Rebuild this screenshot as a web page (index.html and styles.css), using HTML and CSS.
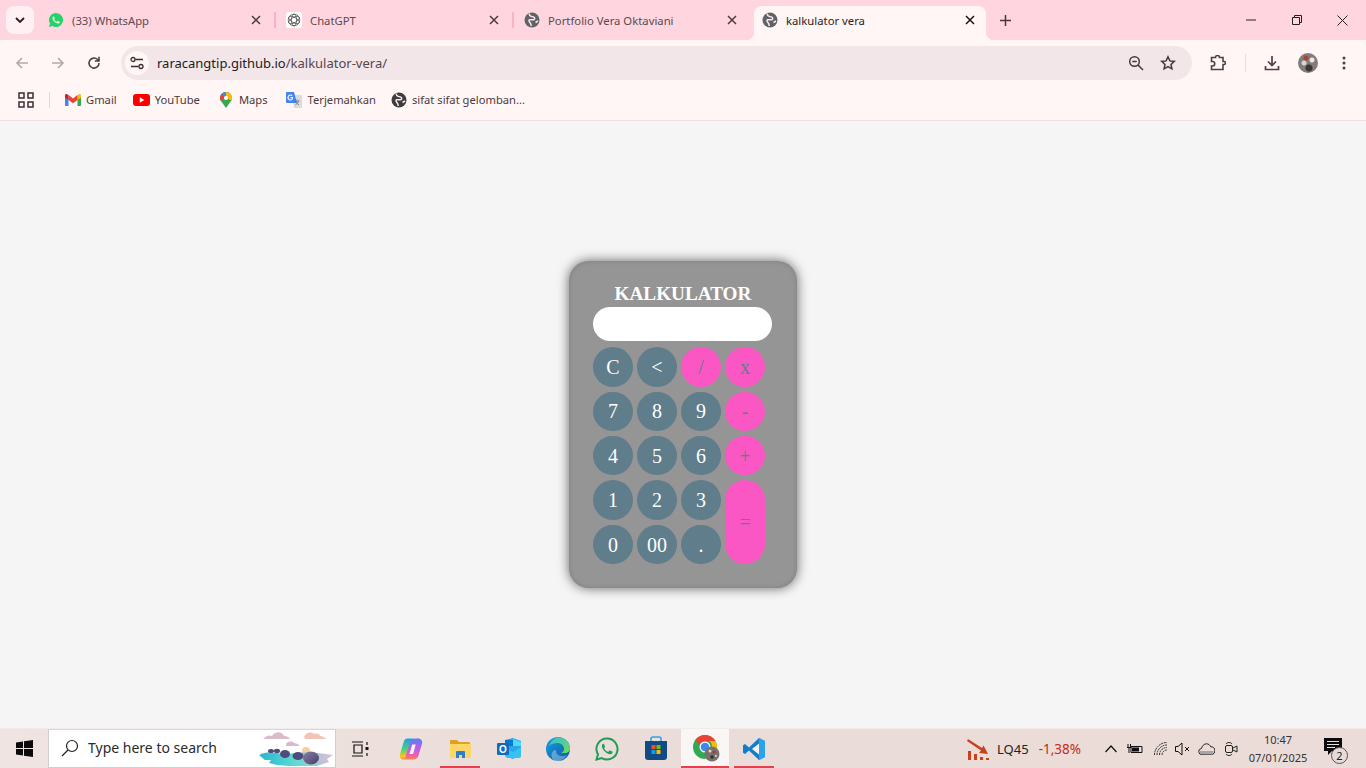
FILE: index.html

```html
<!DOCTYPE html>
<html lang="en">
<head>
    <meta charset="UTF-8">
    <title>kalkulator vera</title>
    <link rel="stylesheet" href="styles.css">
</head>
<body>

<svg class="defs" width="0" height="0">
    <symbol id="globe" viewBox="0 0 16 16">
        <circle cx="8" cy="8" r="7.500" fill="currentColor"/>
        <path d="M5.500 1.500c-1 2.500 2 3 4 3.500 1.800.5 1.500 2.800-.5 2.800-2.200 0-4-.8-4 .9 0 1.600 2.200 1.600 2.200 5.300" fill="none" stroke="#ffe6eb" stroke-width="1.500"/>
        <path d="M11.500 10.500l2.500-1.500" fill="none" stroke="#ffe6eb" stroke-width="1.500"/>
    </symbol>
    <symbol id="close" viewBox="0 0 10 10">
        <path d="M1 1l8 8M9 1l-8 8" stroke="currentColor" stroke-width="1.500" fill="none"/>
    </symbol>
    <symbol id="wa" viewBox="0 0 24 24">
        <path d="M12 1.500A10.500 10.500 0 0 0 3 17.400L1.500 22.500l5.300-1.400A10.500 10.500 0 1 0 12 1.500z" fill="#25d366"/>
        <path d="M8.300 6.800c-.5 0-1.400.7-1.400 2.300 0 3.400 4.500 8.100 8.200 8.100 1.600 0 2.500-1.100 2.500-1.900 0-.5-.1-.7-.4-.8l-2.300-1.100c-.3-.1-.5 0-.7.3l-.8 1c-.2.200-.4.200-.7.100-1.500-.7-2.700-1.800-3.500-3.300-.1-.3 0-.4.100-.6l.6-.8c.2-.2.200-.4.100-.7L9.100 7.300c-.2-.4-.4-.5-.8-.5z" fill="#fff"/>
    </symbol>
</svg>

<div class="page">
    <div class="tabstrip">
        <button class="tab-menu">
            <svg width="10" height="6" viewBox="0 0 10 6"><path d="M1 1l4 4 4-4" stroke="#2a1a20" stroke-width="1.800" fill="none"/></svg>
        </button>

        <div class="tab">
            <svg class="favicon" viewBox="0 0 24 24"><use href="#wa"/></svg>
            <span class="tab-title">(33) WhatsApp</span>
            <svg class="tab-x"><use href="#close"/></svg>
        </div>
        <i class="tab-sep"></i>
        <div class="tab">
            <span class="favicon gpt-box">
                <svg width="14" height="14" viewBox="0 0 14 14" fill="none" stroke="#555" stroke-width=".8">
                    <circle cx="7" cy="7" r="5.800"/>
                    <ellipse cx="7" cy="7" rx="6" ry="2.600" transform="rotate(30 7 7)"/>
                    <ellipse cx="7" cy="7" rx="6" ry="2.600" transform="rotate(90 7 7)"/>
                    <ellipse cx="7" cy="7" rx="6" ry="2.600" transform="rotate(150 7 7)"/>
                </svg>
            </span>
            <span class="tab-title">ChatGPT</span>
            <svg class="tab-x"><use href="#close"/></svg>
        </div>
        <i class="tab-sep"></i>
        <div class="tab">
            <svg class="favicon grey"><use href="#globe"/></svg>
            <span class="tab-title">Portfolio Vera Oktaviani</span>
            <svg class="tab-x"><use href="#close"/></svg>
        </div>
        <i class="tab-sep off"></i>
        <div class="tab active">
            <svg class="favicon grey"><use href="#globe"/></svg>
            <span class="tab-title">kalkulator vera</span>
            <svg class="tab-x"><use href="#close"/></svg>
        </div>

        <svg class="new-tab" width="11" height="11" viewBox="0 0 11 11"><path d="M5.500 0v11M0 5.500h11" stroke="#4a3640" stroke-width="1.500"/></svg>

        <div class="win-btns">
            <svg width="10" height="10" viewBox="0 0 10 10"><path d="M0 5h10" stroke="#222" stroke-width="1"/></svg>
            <svg width="10" height="10" viewBox="0 0 10 10" fill="none" stroke="#222"><path d="M.5 2.500h7v7h-7zM2.500 2.500v-2h7v7h-2"/></svg>
            <svg width="11" height="11" viewBox="0 0 11 11"><path d="M.5.500l10 10M10.500.500l-10 10" stroke="#222" stroke-width="1"/></svg>
        </div>
    </div>

    <div class="toolbar">
        <svg class="tool dim" viewBox="0 0 16 16"><path d="M14 8H3M8 3L3 8l5 5" stroke="currentColor" stroke-width="1.600" fill="none"/></svg>
        <svg class="tool dim" viewBox="0 0 16 16"><path d="M2 8h11M8 3l5 5-5 5" stroke="currentColor" stroke-width="1.600" fill="none"/></svg>
        <svg class="tool" viewBox="0 0 16 16"><path d="M13 8a5 5 0 1 1-1.500-3.500L13 6M13 1.800V6H8.800" stroke="currentColor" stroke-width="1.600" fill="none"/></svg>

        <div class="address">
            <span class="site-info">
                <svg width="14" height="14" viewBox="0 0 14 14" fill="none" stroke="#3c2c32" stroke-width="1.300">
                    <path d="M5.500 3.500H13M1 10.500h7.500"/>
                    <circle cx="3" cy="3.500" r="2"/>
                    <circle cx="11" cy="10.500" r="2"/>
                </svg>
            </span>
            <span class="url">raracangtip.github.io<span class="url-path">/kalkulator-vera/</span></span>
            <svg class="addr-icon" viewBox="0 0 16 16" fill="none" stroke="#4a363d" stroke-width="1.500"><circle cx="6.500" cy="6.500" r="4.800"/><path d="M10 10l5 5M4.300 6.500h4.400"/></svg>
            <svg class="addr-icon" viewBox="0 0 16 16" fill="none" stroke="#4a363d" stroke-width="1.500"><path d="M8 1.800l1.900 4.100 4.400.5-3.300 3 .9 4.400L8 11.600l-3.900 2.200.9-4.400-3.300-3 4.400-.5z"/></svg>
        </div>

        <svg class="tool ext" viewBox="0 0 16 16" fill="none" stroke="currentColor" stroke-width="1.600"><path d="M1.500 2.500h4a2 2 0 0 1 4 0h3.500v4h1a1.500 1.500 0 0 1 0 3h-1v5H1.500v-3.500h1a2 2 0 0 0 0-4.500h-1z"/></svg>
        <i class="tool-sep"></i>
        <svg class="tool dl" viewBox="0 0 16 16" fill="none" stroke="currentColor" stroke-width="1.700"><path d="M8 1v9M4 6.500L8 10.500l4-4M1.500 11v3.500h13V11"/></svg>
        <span class="avatar"></span>
        <svg class="kebab" width="4" height="14" viewBox="0 0 4 14" fill="#553c44"><circle cx="2" cy="2" r="1.500"/><circle cx="2" cy="7" r="1.500"/><circle cx="2" cy="12" r="1.500"/></svg>
    </div>

    <div class="bookmarks">
        <svg class="apps" width="16" height="16" viewBox="0 0 16 16" fill="none" stroke="#3c2c32" stroke-width="1.500"><path d="M1 1h5v5H1zM10 1h5v5h-5zM1 10h5v5H1zM10 10h5v5h-5z"/></svg>
        <i class="book-sep"></i>
        <div class="bm bm-gmail">
            <svg width="16" height="12" viewBox="0 0 16 12">
                <path d="M0 2v9a1 1 0 0 0 1 1h2.500V5.500z" fill="#4285f4"/>
                <path d="M16 2v9a1 1 0 0 1-1 1h-2.500V5.500z" fill="#34a853"/>
                <path d="M12.500 1v5L16 3.500V1.500C16 .300 14.600-.300 13.700.400z" fill="#fbbc04"/>
                <path d="M3.500 1v5L8 9.300 12.500 6V1L8 4.400z" fill="#ea4335"/>
                <path d="M0 1.500v2L3.500 6V1L2.300.400C1.400-.300 0 .300 0 1.500z" fill="#c5221f"/>
            </svg>
            <span>Gmail</span>
        </div>
        <div class="bm bm-yt">
            <svg width="17" height="12" viewBox="0 0 17 12"><rect width="17" height="12" rx="3" fill="#f00"/><path d="M6.800 3.300v5.400L11.300 6z" fill="#fff"/></svg>
            <span>YouTube</span>
        </div>
        <div class="bm bm-maps">
            <svg width="12" height="16" viewBox="0 0 12 16">
                <path d="M6 0a6 6 0 0 1 6 6c0 1.500-.6 2.600-1.400 3.600L6 16 1.400 9.600C.6 8.600 0 7.500 0 6a6 6 0 0 1 6-6z" fill="#34a853"/>
                <path d="M1.400 9.600L10 1.400A6 6 0 0 0 6 0a6 6 0 0 0-4.600 2.100z" fill="#4285f4"/>
                <path d="M6 0a6 6 0 0 1 6 6 5 5 0 0 1-.6 2.400L6 6z" fill="#fbbc04"/>
                <path d="M1.400 2.100A6 6 0 0 0 0 6c0 1.200.4 2.300 1 3.100L6 6z" fill="#ea4335"/>
                <circle cx="6" cy="6" r="2.100" fill="#fff"/>
            </svg>
            <span>Maps</span>
        </div>
        <div class="bm bm-tr">
            <svg width="16" height="16" viewBox="0 0 16 16">
                <path d="M6 3h9a1 1 0 0 1 1 1v11a1 1 0 0 1-1 1H8z" fill="#d9dcdc"/>
                <path d="M1 0h7l3 11H1a1 1 0 0 1-1-1V1a1 1 0 0 1 1-1z" fill="#4285f4"/>
                <path d="M7 5H4.500v1.200H6c-.2.800-.800 1.200-1.500 1.200a1.900 1.900 0 0 1 0-3.800c.5 0 .9.200 1.200.500l.9-.9A3.100 3.100 0 1 0 4.500 8.600C6.200 8.600 7.300 7.300 7 5z" fill="#fff"/>
                <path d="M11 7.500v1M9 9h4.500M12.500 9c-.3 1.500-1.500 3-3 3.800M10 10c.5 1 1.500 2 3 2.800" stroke="#6b7075" fill="none" stroke-width=".8"/>
            </svg>
            <span>Terjemahkan</span>
        </div>
        <div class="bm bm-last">
            <svg class="bm-globe" width="16" height="16"><use href="#globe"/></svg>
            <span>sifat sifat gelomban...</span>
        </div>
    </div>

    <main class="content">
        <div class="kalkulator">
            <h1 class="judul">KALKULATOR</h1>
            <input class="layar" type="text">
            <div class="tombol">
                <button class="btn">C</button>
                <button class="btn">&lt;</button>
                <button class="btn op">/</button>
                <button class="btn op">x</button>
                <button class="btn">7</button>
                <button class="btn">8</button>
                <button class="btn">9</button>
                <button class="btn op">-</button>
                <button class="btn">4</button>
                <button class="btn">5</button>
                <button class="btn">6</button>
                <button class="btn op">+</button>
                <button class="btn">1</button>
                <button class="btn">2</button>
                <button class="btn">3</button>
                <button class="btn op sama">=</button>
                <button class="btn">0</button>
                <button class="btn">00</button>
                <button class="btn">.</button>
            </div>
        </div>
    </main>

    <div class="taskbar">
        <svg class="win-logo" width="17" height="17" viewBox="0 0 17 17" fill="#0b0b0b"><path d="M0 2.400l7-1v6.600H0zM8 1.300L17 0v8H8zM0 9h7v6.600l-7-1zM8 9h9v8l-9-1.300z"/></svg>

        <div class="search">
            <svg width="18" height="18" viewBox="0 0 18 18" fill="none" stroke="#222" stroke-width="1.200"><circle cx="11" cy="7" r="5.500"/><path d="M7 11l-6 6"/></svg>
            <span class="search-text">Type here to search</span>
            <svg class="scene" width="76" height="38" viewBox="0 0 76 38">
                <defs>
                    <linearGradient id="air" x1="0" x2="1"><stop offset="0" stop-color="#25b6d2"/><stop offset=".5" stop-color="#5fdcd0"/><stop offset="1" stop-color="#e7b8dc"/></linearGradient>
                    <linearGradient id="rock" x1="0" y1="0" x2="1" y2="1"><stop offset="0" stop-color="#8c7ea0"/><stop offset="1" stop-color="#453f6e"/></linearGradient>
                </defs>
                <path d="M5 8c3-3 6-3 8-2 3-5 10-5 12 0 3 0 5 1 6 3H5z" fill="#d9bccb"/>
                <path d="M45 7c1-4 7-6 10-3 3-1 6 0 6 2 3 0 5 2 6 3H46z" fill="#f3c4b6"/>
                <path d="M27 14c2-3 6-3 8-1 2 0 4 1 6 3H27z" fill="#dcb8d0"/>
                <circle cx="47" cy="21" r="4" fill="#f6cf9f"/>
                <path d="M0 25c8-4 16-2 24-1l28-2 22 3-6 4 2 3-12 4H30l-12-1-8-2 2-3-6 0z" fill="url(#air)"/>
                <ellipse cx="12" cy="21" rx="3" ry="2" fill="#4e4a7c"/>
                <ellipse cx="18" cy="21" rx="3" ry="2.200" fill="#4e4a7c"/>
                <ellipse cx="26" cy="24" rx="5" ry="4" fill="#4e4a7c"/>
                <ellipse cx="39" cy="26" rx="5.500" ry="4" fill="#4e4a7c"/>
                <ellipse cx="52" cy="28" rx="8" ry="6.500" fill="url(#rock)"/>
            </svg>
        </div>

        <div class="task-item task-view">
            <svg width="18" height="16" viewBox="0 0 18 16" fill="none" stroke="#111" stroke-width="1.200"><path d="M1 1h11M1 15h11M3 4h8v8H3zM16 1v3M16 12v3"/><rect x="14.500" y="6" width="3" height="3" fill="#111" stroke="none"/></svg>
        </div>
        <div class="task-item">
            <svg width="24" height="24" viewBox="0 0 24 24">
                <defs>
                    <linearGradient id="cop1" x1="0" y1="0" x2="0" y2="1"><stop offset="0" stop-color="#1b9fe8"/><stop offset=".5" stop-color="#49d27a"/><stop offset=".85" stop-color="#f8c81e"/><stop offset="1" stop-color="#f58a3c"/></linearGradient>
                    <linearGradient id="cop2" x1="0" y1="0" x2="0" y2="1"><stop offset="0" stop-color="#5a7cf5"/><stop offset=".45" stop-color="#b95ee8"/><stop offset=".8" stop-color="#f55bb0"/><stop offset="1" stop-color="#f6883c"/></linearGradient>
                </defs>
                <path d="M8.500 1.500h5c2.500 0 3.500 1.500 2.800 3.500L12 18.500c-.8 2.500-2.500 4-5 4H5c-3 0-4.800-2.500-4-5.300L4.500 5.500C5.200 3 6.500 1.500 8.500 1.500z" fill="url(#cop1)"/>
                <path d="M17 1.500h2c3 0 5 2.500 4 5.300L19.500 18.500c-.8 2.500-2.500 4-5 4h-5c-2.500 0-3.500-1.500-2.800-3.500L11 5.500c.8-2.500 3.500-4 6-4z" fill="url(#cop2)"/>
                <path d="M13.200 7.500h3.500l-2.600 9.500h-3.600z" fill="#fdf6f6"/>
            </svg>
        </div>
        <div class="task-item open">
            <svg width="22" height="20" viewBox="0 0 22 20">
                <path d="M1 2a1 1 0 0 1 1-1h6l2 2h10a1 1 0 0 1 1 1v3H1z" fill="#e0a020"/>
                <path d="M1 5h20a1 1 0 0 1 1 1v12a1 1 0 0 1-1 1H2a1 1 0 0 1-1-1z" fill="#fcd669"/>
                <path d="M7 19v-6a1 1 0 0 1 1-1h7a1 1 0 0 1 1 1v6h-3v-3h-3v3z" fill="#2f7fc7"/>
            </svg>
        </div>
        <div class="task-item">
            <svg width="24" height="22" viewBox="0 0 24 22">
                <path d="M8 2l8-2 8 3v14l-8 4-8-3z" fill="#28a8ea"/>
                <path d="M8 2h8v6H8z" fill="#0078d4"/>
                <path d="M16 1l8 3v4h-8z" fill="#50d9ff"/>
                <path d="M24 9v9a2 2 0 0 1-2 2H10l-2-2V10l8 4z" fill="#35c1f1"/>
                <rect y="5" width="12" height="12" rx="1" fill="#0f6cbd"/>
                <text x="6" y="15" class="ol-letter">O</text>
            </svg>
        </div>
        <div class="task-item">
            <svg width="24" height="24" viewBox="0 0 24 24">
                <defs>
                    <linearGradient id="edge1" x1="0" y1="0" x2="1" y2="1"><stop offset="0" stop-color="#1b9de2"/><stop offset="1" stop-color="#0c59a4"/></linearGradient>
                    <linearGradient id="edge2" x1="0" y1="0" x2="1" y2="1"><stop offset="0" stop-color="#33bfd8"/><stop offset="1" stop-color="#6fdc54"/></linearGradient>
                </defs>
                <circle cx="12" cy="12" r="12" fill="url(#edge1)"/>
                <path d="M3 9C5 3 10 0 14 .4c5 .4 10 5 10 11 0 2-1 4-4 4.500h-5c2-1 3-2 3-4 0-4-3.500-6-6.500-6C8 6 4.500 7 3 9z" fill="url(#edge2)"/>
                <path d="M10 14c0 3 3 5 6 5 2 0 3.600-.5 5-1.600C19 21.500 15 24 11 24c-3 0-5.500-2-5.500-6 0-3 2-5 4.500-5z" fill="#e9f7fb" opacity=".35"/>
            </svg>
        </div>
        <div class="task-item">
            <svg width="24" height="24" viewBox="0 0 24 24">
                <path d="M12 1.500A10.500 10.500 0 0 0 3 17.400L1.500 22.500l5.300-1.400A10.500 10.500 0 1 0 12 1.500z" fill="none" stroke="#1f9e57" stroke-width="2"/>
                <path d="M8.300 6.800c-.5 0-1.400.7-1.400 2.300 0 3.400 4.500 8.100 8.200 8.100 1.600 0 2.500-1.100 2.500-1.900 0-.5-.1-.7-.4-.8l-2.300-1.100c-.3-.1-.5 0-.7.3l-.8 1c-.2.200-.4.200-.7.100-1.500-.7-2.700-1.800-3.500-3.300-.1-.3 0-.4.100-.6l.6-.8c.2-.2.200-.4.100-.7L9.100 7.300c-.2-.4-.4-.5-.8-.5z" fill="#1f9e57"/>
            </svg>
        </div>
        <div class="task-item">
            <svg width="24" height="25" viewBox="0 0 24 25">
                <path d="M7 7V3a2 2 0 0 1 2-2h6a2 2 0 0 1 2 2v4" fill="none" stroke="#2aa7e8" stroke-width="1.600"/>
                <path d="M1 5h22v16a3 3 0 0 1-3 3H4a3 3 0 0 1-3-3z" fill="#124a85"/>
                <rect x="7.500" y="9" width="4" height="4" fill="#f25022"/>
                <rect x="12.500" y="9" width="4" height="4" fill="#7fba00"/>
                <rect x="7.500" y="14" width="4" height="4" fill="#00a4ef"/>
                <rect x="12.500" y="14" width="4" height="4" fill="#ffb900"/>
            </svg>
        </div>
        <div class="task-item current">
            <svg class="chrome-ic" width="27" height="27" viewBox="0 0 27 27">
                <circle cx="12" cy="12" r="12" fill="#34a853"/>
                <path d="M12 0a12 12 0 0 1 10.400 6H12a6 6 0 0 0-5.600 3.800L2.500 4.800A12 12 0 0 1 12 0z" fill="#ea4335"/>
                <path d="M22.400 6A12 12 0 0 1 12 24l5.200-9a6 6 0 0 0-.6-9z" fill="#fbbc04"/>
                <circle cx="12" cy="12" r="5.500" fill="#fff"/>
                <circle cx="12" cy="12" r="4.300" fill="#4285f4"/>
                <circle cx="19" cy="19" r="7.500" fill="#77716f"/>
                <circle cx="17" cy="16" r="1.500" fill="#d8d4d2"/>
                <circle cx="21" cy="17" r="1.500" fill="#a63d33"/>
                <circle cx="19" cy="22" r="1.800" fill="#36312f"/>
                <circle cx="23" cy="21" r="1" fill="#e0dcda"/>
            </svg>
        </div>
        <div class="task-item open">
            <svg width="24" height="24" viewBox="0 0 24 24">
                <path d="M17 1l6 3v16l-6 3L7 13.500 3 17l-2-1.200V8.200L3 7l4 3.500z" fill="#0e7fd0"/>
                <path d="M17 6.500L10 12l7 5.500z" fill="#fbf0ec"/>
                <path d="M17 1l6 3v16l-6 3z" fill="#2aa3ea"/>
            </svg>
        </div>

        <div class="tray">
            <svg class="lq-icon" width="24" height="24" viewBox="0 0 24 24" fill="#c8401c">
                <path d="M1 2l14 9 1.500-2.500L21 17l-9-1 2-2.500L0 4z"/>
                <rect x="1" y="14" width="3" height="9"/>
                <rect x="7" y="17" width="3" height="6"/>
                <rect x="13" y="20" width="3" height="3"/>
                <rect x="19" y="21" width="3" height="2"/>
            </svg>
            <span class="lq-name">LQ45</span>
            <span class="lq-val">-1,38%</span>

            <svg class="tray-ic caret" width="12" height="8" viewBox="0 0 12 8" fill="none" stroke="#111" stroke-width="1.200"><path d="M.5 7L6 1l5.500 6"/></svg>
            <svg class="tray-ic batt" width="16" height="12" viewBox="0 0 16 12" fill="none" stroke="#111"><path d="M4 3.500h11v6H4z"/><rect x="5" y="4.500" width="7" height="4" fill="#111" stroke="none"/><path d="M1 1v3M3.500 1v3M0 4.500h4.500M2 5v5" stroke-width="1"/></svg>
            <svg class="tray-ic wifi" width="14" height="14" viewBox="0 0 14 14" fill="none" stroke="#333" stroke-width="1"><path d="M.5 13A12.500 12.500 0 0 1 13 .5M3 13A10 10 0 0 1 13 3M5.500 13A7.500 7.500 0 0 1 13 5.500M8 13a5 5 0 0 1 5-5" stroke-dasharray="2 .7"/></svg>
            <svg class="tray-ic mute" width="15" height="14" viewBox="0 0 15 14" fill="none" stroke="#111" stroke-width="1"><path d="M.5 4.500h2.500L7 1v12L3 9.500H.5zM10 5l4 4M14 5l-4 4"/></svg>
            <svg class="tray-ic cloud" width="17" height="12" viewBox="0 0 17 12" fill="none" stroke="#222" stroke-width="1"><path d="M4 11.500a3 3 0 0 1-.5-6C4 3 6 .8 8.500.8c2 0 3.500 1.200 4.200 3a3.800 3.800 0 0 1 .5 7.700z"/><path d="M1.500 8h14v2l-2 1.500h-9L2 10.500z" fill="#a9a5a4" stroke="none"/></svg>
            <svg class="tray-ic cam" width="13" height="16" viewBox="0 0 13 16" fill="none" stroke="#222" stroke-width="1"><path d="M1 3c1-2 5-2 6 0M1 13c1 2 5 2 6 0"/><rect x=".5" y="4.500" width="7" height="7" rx="1.500"/><path d="M8 7l4-2v6l-4-2"/></svg>

            <div class="clock">
                <span>10:47</span>
                <span>07/01/2025</span>
            </div>

            <div class="notif">
                <svg width="18" height="17" viewBox="0 0 18 17" fill="#0b0b0b"><path d="M0 0h18v13H8l-4 4v-4H0z"/><path d="M3 3.500h12M3 6.500h12M3 9.500h8" stroke="#efe0dc" stroke-width="1"/></svg>
                <span class="badge">2</span>
            </div>
        </div>
    </div>
</div>

</body>
</html>
```

FILE: styles.css

```css
* {
    padding: 0;
    margin: 0;
    box-sizing: border-box;
}

html, body {
    width: 1366px;
    height: 768px;
    overflow: hidden;
}

body {
    font-family: "Noto Sans", "Open Sans", sans-serif;
    background: #f5f5f5;
}

.defs {
    position: absolute;
}

.page {
    height: 768px;
    display: flex;
    flex-direction: column;
}

/* tab bar */
.tabstrip {
    height: 40px;
    flex: none;
    display: flex;
    align-items: flex-end;
    background: #ffd6df;
    padding-left: 6px;
}

.tab-menu {
    width: 28px;
    height: 28px;
    margin: 0 6px 6px 0;
    border: 0;
    border-radius: 8px;
    background: #fff0f3;
    display: flex;
    align-items: center;
    justify-content: center;
}

.tab {
    width: 232px;
    height: 34px;
    padding: 0 10px 6px;
    display: flex;
    align-items: center;
    position: relative;
    color: #5a4a50;
    font-size: 11.300px;
}

.tab.active {
    background: #fff6f5;
    border-radius: 8px 8px 0 0;
    color: #2c2226;
}

.tab.active::before,
.tab.active::after {
    content: "";
    position: absolute;
    bottom: 0;
    width: 8px;
    height: 8px;
}

.tab.active::before {
    left: -8px;
    background: radial-gradient(circle at 0 0, transparent 8px, #fff6f5 8.500px);
}

.tab.active::after {
    right: -8px;
    background: radial-gradient(circle at 100% 0, transparent 8px, #fff6f5 8.500px);
}

.favicon {
    width: 16px;
    height: 16px;
    flex: none;
    margin-left: -2px;
}

.favicon.grey {
    color: #5f6368;
}

.gpt-box {
    background: #fff;
    border-radius: 2px;
    display: flex;
    align-items: center;
    justify-content: center;
}

.tab-title {
    flex: 1;
    margin-left: 8px;
    white-space: nowrap;
}

.tab-x {
    width: 10px;
    height: 10px;
    flex: none;
    margin-right: 1px;
    color: #4a3a40;
}

.tab.active .tab-x {
    color: #1c1216;
}

.tab-sep {
    width: 2px;
    height: 16px;
    margin: 0 2px 12px;
    background: #f8b4c2;
}

.tab-sep.off {
    background: none;
}

.new-tab {
    margin: 0 0 14px 14px;
}

.win-btns {
    margin-left: auto;
    width: 138px;
    height: 40px;
    display: flex;
    align-items: center;
    justify-content: space-between;
    padding: 0 18px;
    align-self: flex-start;
}

/* toolbar */
.toolbar {
    height: 40px;
    flex: none;
    background: #fff6f5;
    border-radius: 8px 8px 0 0;
    display: flex;
    align-items: flex-end;
    padding-left: 14px;
    color: #553c44;
}

.tool {
    width: 16px;
    height: 16px;
    flex: none;
    margin: 0 20px 9px 0;
}

.tool.dim {
    color: #b4a8ac;
}

.address {
    width: 1071px;
    height: 34px;
    margin-left: -1px;
    background: #f2e6e9;
    border-radius: 17px;
    display: flex;
    align-items: center;
    padding: 0 16px 0 4px;
}

.site-info {
    width: 24px;
    height: 24px;
    border-radius: 50%;
    background: #fff6f5;
    display: flex;
    align-items: center;
    justify-content: center;
}

.url {
    flex: 1;
    margin-left: 8px;
    font-size: 13px;
    color: #241a1e;
}

.url-path {
    color: #56474d;
}

.addr-icon {
    width: 16px;
    height: 16px;
    margin-left: 16px;
}

.tool.ext {
    margin: 0 19px 9px 18px;
}

.tool-sep {
    width: 1px;
    height: 18px;
    margin: 0 18px 8px 0;
    background: #f7d5dc;
}

.tool.dl {
    margin: 0 18px 9px 0;
}

.avatar {
    width: 20px;
    height: 20px;
    margin-bottom: 7px;
    border-radius: 50%;
    background:
        radial-gradient(circle at 40% 25%, #a8453a 0 2px, transparent 3px),
        radial-gradient(circle at 70% 35%, #ece8e6 0 2px, transparent 3px),
        radial-gradient(circle at 30% 50%, #d9d5d3 0 2px, transparent 3px),
        radial-gradient(circle at 55% 75%, #3c3634 0 3px, transparent 4px),
        #827c7a;
}

.kebab {
    margin: 0 0 10px 24px;
}

/* bookmarks */
.bookmarks {
    height: 41px;
    flex: none;
    background: #fff6f5;
    border-bottom: 1px solid #f6dde2;
    display: flex;
    align-items: center;
    padding: 0 0 1px 18px;
    font-size: 11.200px;
    color: #4a3a40;
}

.book-sep {
    width: 1px;
    height: 16px;
    margin: 0 15px;
    background: #f7cfd8;
}

.bm {
    display: flex;
    align-items: center;
    gap: 6px;
    margin-right: 17px;
    white-space: nowrap;
}

.bm-gmail {
    gap: 5px;
    margin-right: 16px;
}

.bm-yt {
    gap: 5px;
    margin-right: 20px;
}

.bm-maps {
    gap: 7px;
    margin-right: 18px;
}

.bm-tr {
    margin-right: 15px;
}

.bm-last {
    gap: 5px;
}

.bm-globe {
    color: #3c3c40;
}

/* calculator */
.content {
    flex: 1;
    display: flex;
    align-items: center;
    justify-content: center;
    background: #f5f5f5;
}

.kalkulator {
    width: 228px;
    height: 327px;
    padding: 22px 24px;
    background: #959595;
    border-radius: 20px;
    box-shadow: 0 0 12px rgba(0, 0, 0, .6), inset 0 0 5px rgba(0, 0, 0, .15);
}

.judul {
    height: 24px;
    width: 180px;
    text-align: center;
    font: bold 19.200px/22px "Liberation Serif", serif;
    color: #fff;
}

.layar {
    display: block;
    width: 179px;
    height: 34px;
    border: 0;
    border-radius: 17px;
    background: #fff;
}

.tombol {
    margin-top: 6.200px;
    display: grid;
    grid-template-columns: repeat(4, 40px);
    grid-auto-rows: 39.500px;
    gap: 4.900px 4px;
}

.btn {
    border: 0;
    border-radius: 20px;
    padding-top: 1px;
    background: #607d8b;
    color: #fff;
    font: 20px "Liberation Serif", serif;
}

.btn.op {
    background: #fa57c5;
    color: #607d8b;
}

.btn.sama {
    grid-column: 4;
    grid-row: 4 / span 2;
}

/* windows taskbar */
.taskbar {
    height: 40px;
    flex: none;
    display: flex;
    align-items: stretch;
    background: linear-gradient(90deg, #efe4e1, #eadcd8 50%, #ecdcd9);
    border-top: 1px solid #f3ebe9;
}

.win-logo {
    margin: 11px 15px 0 16px;
}

.search {
    width: 288px;
    display: flex;
    align-items: center;
    padding: 0 0 2px 12px;
    background: #fff;
    border: 1px solid #cfcfcf;
    border-top-color: #d8d8d8;
    position: relative;
}

.search-text {
    margin-left: 9px;
    font-size: 14px;
    color: #2b2b2b;
}

.scene {
    position: absolute;
    right: 0;
    top: 0;
}

.task-item {
    width: 48px;
    margin-right: 1px;
    display: flex;
    align-items: center;
    justify-content: center;
    position: relative;
}

.task-item.task-view {
    margin-right: 3px;
}

.task-item.open::after,
.task-item.current::after {
    content: "";
    position: absolute;
    bottom: 0;
    left: 4px;
    right: 4px;
    height: 2px;
    background: #e0424f;
}

.task-item.current {
    background: #faf6f5;
}

.task-item.current::after {
    left: 0;
    right: 0;
}

.chrome-ic {
    margin-left: 2px;
}

.ol-letter {
    font: bold 10px "Liberation Sans", sans-serif;
    fill: #fff;
    text-anchor: middle;
}

.tray {
    margin-left: auto;
    display: flex;
    align-items: center;
    font-size: 13px;
    color: #222;
}

.lq-name {
    margin-left: 6px;
}

.lq-val {
    margin-left: 10px;
    font-size: 13.500px;
    color: #c42b1c;
}

.tray-ic {
    flex: none;
}

.caret {
    margin-left: 24px;
}

.batt {
    margin-left: 10px;
}

.wifi {
    margin-left: 11px;
}

.mute {
    margin-left: 7px;
}

.cloud {
    margin-left: 8px;
}

.cam {
    margin-left: 10px;
}

.clock {
    width: 70px;
    margin-left: 5px;
    display: flex;
    flex-direction: column;
    align-items: center;
    gap: 2px;
    font-size: 11px;
    line-height: 16px;
    color: #333;
}

.notif {
    width: 30px;
    height: 30px;
    margin: 0 12px 0 11px;
    position: relative;
    padding-top: 4px;
}

.badge {
    position: absolute;
    right: 6px;
    bottom: 0;
    width: 17px;
    height: 17px;
    border: 1px solid #555;
    border-radius: 50%;
    background: #e9dbd8;
    font-size: 11px;
    line-height: 15px;
    text-align: center;
}
```
